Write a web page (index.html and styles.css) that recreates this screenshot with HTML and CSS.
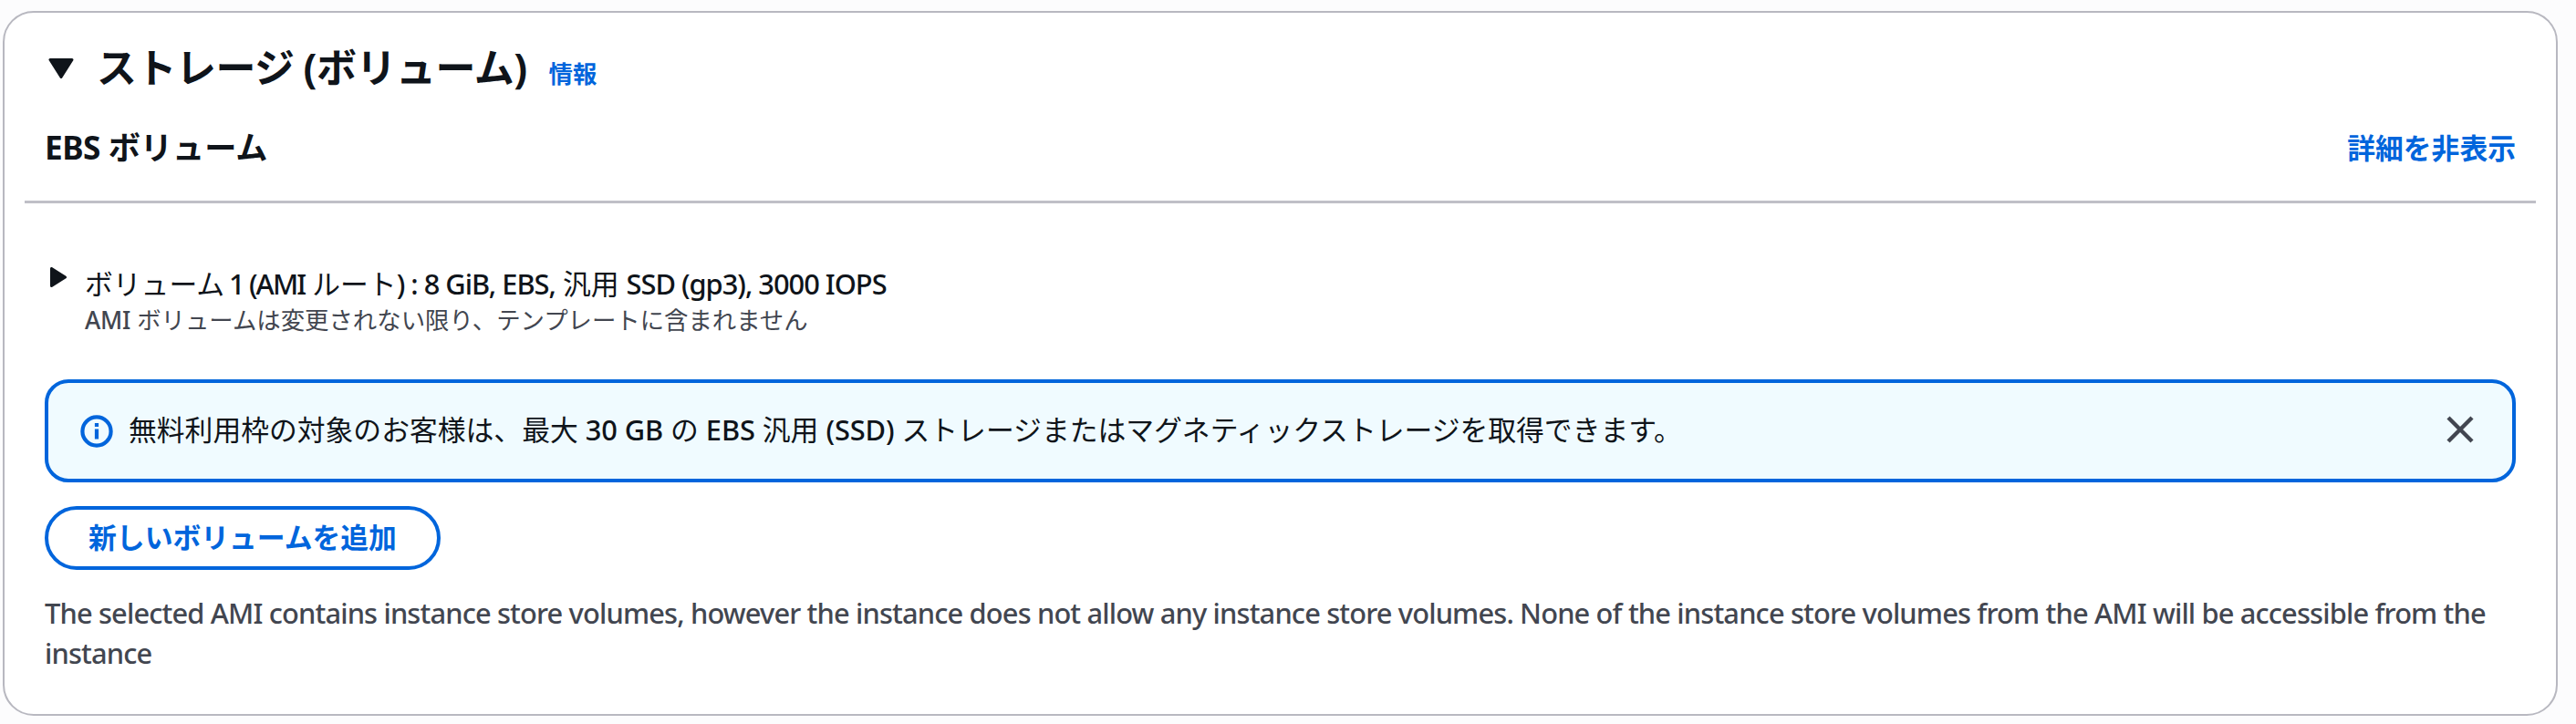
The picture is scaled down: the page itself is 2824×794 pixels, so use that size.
FILE: index.html
```html
<!DOCTYPE html>
<html lang="ja">
<head>
<meta charset="utf-8">
<title>ストレージ (ボリューム)</title>
<link rel="stylesheet" href="styles.css">
</head>
<body>
<section class="card">
  <header class="title-row">
    <svg class="caret-down" viewBox="0 0 28 22"><path d="M2 1.5H26L14 20.5Z"/></svg>
    <h2 class="title">ストレージ <span class="lat">(</span>ボリューム<span class="lat">)</span></h2>
    <a class="info-link">情報</a>
  </header>
  <div class="sub-row">
    <h3 class="subtitle"><span class="lat">EBS</span> ボリューム</h3>
    <a class="toggle-link">詳細を非表示</a>
  </div>
  <hr class="divider">
  <div class="volume">
    <svg class="caret-right" viewBox="0 0 18 22"><path d="M1.5 1.5V20.5L16.5 11Z"/></svg>
    <div class="volume-text">
      <div class="volume-name">ボリューム <span class="lat tight">1 (AMI</span> ルート<span class="lat">) : 8 GiB, EBS,</span> 汎用 <span class="lat">SSD (gp3), 3000 IOPS</span></div>
      <div class="volume-note"><span class="lat">AMI</span> ボリュームは変更されない限り、テンプレートに含まれません</div>
    </div>
  </div>
  <div class="alert">
    <svg class="info-icon" viewBox="0 0 36 36"><circle cx="18" cy="18" r="15.6"/><path d="M18 15.5V26.5M18 9V13"/></svg>
    <p class="alert-text">無料利用枠の対象のお客様は、最大 <span class="lat">30 GB</span> の <span class="lat">EBS</span> 汎用 <span class="lat">(SSD)</span> ストレージまたはマグネティックストレージを取得できます。</p>
    <svg class="close-icon" viewBox="0 0 30 30"><path d="M2 2L28 28M28 2L2 28"/></svg>
  </div>
  <button class="add-button">新しいボリュームを追加</button>
  <p class="note">The selected AMI contains instance store volumes, however the instance does not allow any instance store volumes. None of the instance store volumes from the AMI will be accessible from the instance</p>
</section>
</body>
</html>
```
FILE: styles.css
```css
* { box-sizing: border-box; margin: 0; padding: 0; }
body {
  background: #fcfcfd;
  padding: 12px 20px 9px 3px;
  font-family: "Noto Sans", "Noto Sans CJK JP", sans-serif;
  font-size: 30.8px;
  color: #0f141a;
}
.card {
  height: 773px;
  background: #fff;
  border: 2px solid #b8b8c0;
  border-radius: 34px;
  padding: 28px 22px 0;
}
.lat { letter-spacing: -1px; font-weight: 500; }
.title-row { display: flex; height: 66px; padding-left: 26px; }
.caret-down { width: 28px; height: 22px; margin: 22px 25px 0 0; }
.caret-down path, .caret-right path { fill: #0f141a; stroke: #0f141a; stroke-width: 3; stroke-linejoin: round; }
.title { font-size: 44px; line-height: 64px; font-weight: 700; letter-spacing: -0.5px; word-spacing: -1px; white-space: nowrap; }
.title .lat, .subtitle .lat { font-weight: 700; letter-spacing: -0.5px; }
.info-link { font-size: 26.4px; line-height: 78px; font-weight: 700; margin-left: 24px; color: #0065dc; }
.sub-row { display: flex; justify-content: space-between; align-items: center; height: 112px; padding: 0 22px 4px 22px; }
.subtitle { font-size: 35.2px; line-height: 44px; font-weight: 700; word-spacing: -0.5px; padding-bottom: 3px; }
.toggle-link { color: #0065dc; font-weight: 700; line-height: 44px; }
.divider { border: 0; height: 3px; background: #bfbfc7; }
.volume { display: flex; padding: 67px 0 0 28px; height: 193px; }
.caret-right { width: 18px; height: 22px; margin: 3px 20px 0 0; }
.volume-name { line-height: 42px; white-space: nowrap; }
.volume-name .tight { letter-spacing: -1.9px; margin-left: -3px; }
.volume-note { font-size: 26.4px; line-height: 38px; color: #424650; white-space: nowrap; }
.volume-note .lat { letter-spacing: -0.2px; }
.alert {
  display: flex; align-items: center;
  height: 113px; margin: 0 22px;
  border: 4px solid #0065dc; border-radius: 26px;
  background: #f0fbff;
  padding: 0 42px 0 35px;
}
.info-icon { width: 36px; height: 36px; }
.info-icon circle, .info-icon path { fill: none; stroke: #0065dc; stroke-width: 4.2; }
.alert-text { flex: 1; line-height: 44px; margin: -4px 0 0 17px; white-space: nowrap; }
.alert-text .lat { letter-spacing: -0.1px; }
.close-icon { width: 30px; height: 30px; margin-top: -4px; }
.close-icon path { stroke: #424650; stroke-width: 4.4; }
.add-button {
  display: block; width: 434px; height: 70px; margin: 26px 22px 0;
  border: 4px solid #0065dc; border-radius: 35px; background: #fff;
  color: #0065dc; font: 700 30.8px/56px "Noto Sans CJK JP", sans-serif; padding-bottom: 4px;
}
.note { margin: 25px 22px 0; line-height: 44px; color: #424650; font-weight: 500; letter-spacing: -0.84px; }
```
